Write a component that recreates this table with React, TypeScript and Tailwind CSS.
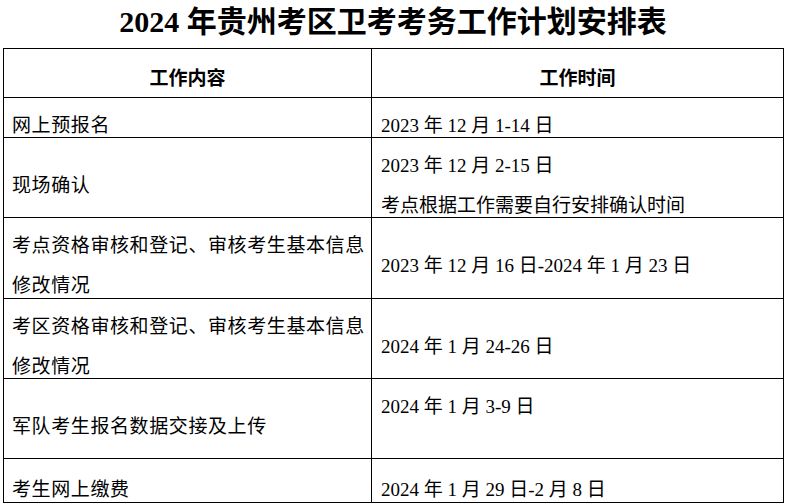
import React from "react";

const FONT = "font-['Liberation_Serif','Noto_Sans_CJK_SC',serif]";

function Line({ children, bold = false }: { children: React.ReactNode; bold?: boolean }) {
  return (
    <div className={`h-[40px] flex items-end pb-[3px] leading-[19px] whitespace-nowrap ${bold ? "font-bold" : ""}`}>
      {children}
    </div>
  );
}

type Row = {
  h: string;
  left: React.ReactNode;
  right: React.ReactNode;
};

const rows: Row[] = [
  {
    h: "h-[40px]",
    left: (
      <div className="flex flex-col">
        <Line>网上预报名</Line>
      </div>
    ),
    right: (
      <div className="flex flex-col">
        <Line>2023 年 12 月 1-14 日</Line>
      </div>
    ),
  },
  {
    h: "h-[80px]",
    left: (
      <div className="flex flex-col justify-center h-full">
        <Line>现场确认</Line>
      </div>
    ),
    right: (
      <div className="flex flex-col">
        <Line>2023 年 12 月 2-15 日</Line>
        <Line>考点根据工作需要自行安排确认时间</Line>
      </div>
    ),
  },
  {
    h: "h-[81px]",
    left: (
      <div className="flex flex-col">
        <Line>考点资格审核和登记、审核考生基本信息</Line>
        <Line>修改情况</Line>
      </div>
    ),
    right: (
      <div className="flex flex-col justify-center h-full">
        <Line>2023 年 12 月 16 日-2024 年 1 月 23 日</Line>
      </div>
    ),
  },
  {
    h: "h-[80px]",
    left: (
      <div className="flex flex-col">
        <Line>考区资格审核和登记、审核考生基本信息</Line>
        <Line>修改情况</Line>
      </div>
    ),
    right: (
      <div className="flex flex-col justify-center h-full">
        <Line>2024 年 1 月 24-26 日</Line>
      </div>
    ),
  },
  {
    h: "h-[80px]",
    left: (
      <div className="flex flex-col justify-center h-full">
        <Line>军队考生报名数据交接及上传</Line>
      </div>
    ),
    right: (
      <div className="flex flex-col">
        <Line>2024 年 1 月 3-9 日</Line>
      </div>
    ),
  },
  {
    h: "h-[44px]",
    left: (
      <div className="flex flex-col pt-[3px]">
        <Line>考生网上缴费</Line>
      </div>
    ),
    right: (
      <div className="flex flex-col pt-[3px]">
        <Line>2024 年 1 月 29 日-2 月 8 日</Line>
      </div>
    ),
  },
];

export default function App() {
  return (
    <div className={`w-[786px] h-[503px] overflow-hidden bg-white text-black ${FONT}`}>
      <div className="h-[48px] flex items-center justify-center pb-[4px]">
        <h1 className="text-[30px] font-bold leading-[32px]">2024 年贵州考区卫考考务工作计划安排表</h1>
      </div>
      <div className="ml-[3px] w-[781px] border-l border-t border-black text-[19px]">
        <div className="flex h-[49px]">
          <div className="w-[368px] border-r border-b border-black flex items-end justify-center pb-[9px]">
            <span className="font-bold leading-[19px]">工作内容</span>
          </div>
          <div className="w-[412px] border-r border-b border-black flex items-end justify-center pb-[9px]">
            <span className="font-bold leading-[19px]">工作时间</span>
          </div>
        </div>
        {rows.map((r, i) => (
          <div key={i} className={`flex ${r.h}`}>
            <div className="w-[368px] border-r border-b border-black pl-[8px] box-border tracking-[0.6px]">{r.left}</div>
            <div className="w-[412px] border-r border-b border-black pl-[9px] box-border">{r.right}</div>
          </div>
        ))}
      </div>
    </div>
  );
}
